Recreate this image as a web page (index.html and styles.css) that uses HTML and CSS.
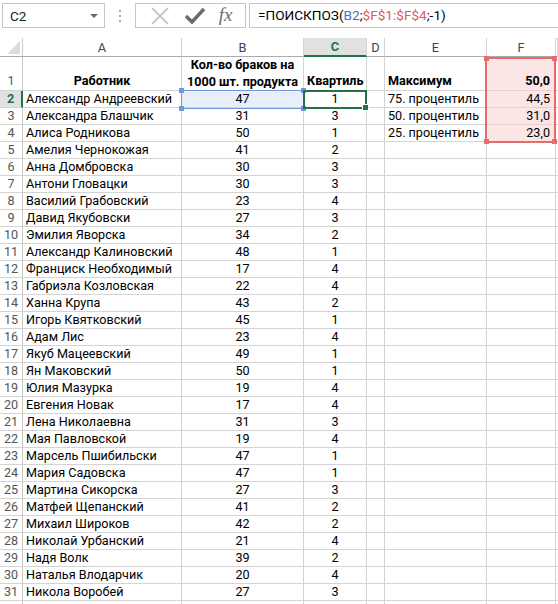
FILE: index.html
```html
<!DOCTYPE html>
<html lang="ru">
<head>
<meta charset="utf-8">
<title>Excel</title>
<link rel="stylesheet" href="styles.css">
</head>
<body>
<div class="fbar">
  <div class="namebox"><span class="nb-text">C2</span><span class="nb-arrow"></span></div>
  <div class="grip"><i></i><i></i><i></i></div>
  <div class="btns">
    <svg class="ic" width="22" height="20" viewBox="0 0 22 20"><path d="M3 2 L19 18 M19 2 L3 18" stroke="#c8c8c8" stroke-width="2" fill="none"/></svg>
    <svg class="ic" width="22" height="20" viewBox="0 0 22 20"><path d="M2 10 L8 16 L20 3" stroke="#6a6a6a" stroke-width="3.4" fill="none" stroke-linejoin="miter"/></svg>
    <span class="fx">fx</span>
  </div>
  <div class="formula">=ПОИСКПОЗ(<span class="ref-b">B2</span>;<span class="ref-f">$F$1:$F$4</span>;-1)</div>
</div>
<div class="sheet">
  <div class="grid" id="grid"></div>
  <div class="ov ov-b"><i class="sq tl"></i><i class="sq tr"></i><i class="sq bl"></i><i class="sq br"></i></div>
  <div class="ov ov-c"><i class="fh"></i></div>
  <div class="ov ov-f"><i class="sq tl"></i><i class="sq tr"></i><i class="sq bl"></i><i class="sq br"></i></div>
</div>
<script src="app.js"></script>
</body>
</html>
```
FILE: app.js
```js
const data = [
["Александр Андреевский",47,1],["Александра Блашчик",31,3],["Алиса Родникова",50,1],
["Амелия Чернокожая",41,2],["Анна Домбровска",30,3],["Антони Гловацки",30,3],
["Василий Грабовский",23,4],["Давид Якубовски",27,3],["Эмилия Яворска",34,2],
["Александр Калиновский",48,1],["Франциск Необходимый",17,4],["Габриэла Козловская",22,4],
["Ханна Крупа",43,2],["Игорь Квятковский",45,1],["Адам Лис",23,4],
["Якуб Мацеевский",49,1],["Ян Маковский",50,1],["Юлия Мазурка",19,4],
["Евгения Новак",17,4],["Лена Николаевна",31,3],["Мая Павловской",19,4],
["Марсель Пшибильски",47,1],["Мария Садовска",47,1],["Мартина Сикорска",27,3],
["Матфей Щепанский",41,2],["Михаил Широков",42,2],["Николай Урбанский",21,4],
["Надя Волк",39,2],["Наталья Влодарчик",20,4],["Никола Воробей",27,3]
];
const ef = {2:["75. процентиль","44,5"],3:["50. процентиль","31,0"],4:["25. процентиль","23,0"]};
const g = document.getElementById('grid');
function c(cls, txt){ const d=document.createElement('div'); d.className='cell '+cls; if(txt!==undefined){const s=document.createElement('span'); s.textContent=txt; d.appendChild(s);} g.appendChild(d); return d; }
c('corner').innerHTML='<span class="tri"></span>';
['A','B','C','D','E','F',''].forEach(l=>c('ch'+(l==='C'?' ch-sel':''), l));
c('rh r1', '1');
c('r1 bold center bottom', 'Работник');
c('r1 bold center bottom wrap', 'Кол-во браков на 1000 шт. продукта');
c('r1 bold left bottom', 'Квартиль');
c('r1');
c('r1 bold left bottom', 'Максимум');
c('r1 bold right bottom pink', '50,0');
c('r1 last');
data.forEach((r,i)=>{
  const n=i+2;
  c('rh'+(n===2?' rh-sel':''), String(n));
  c('left', r[0]);
  c('center'+(n===2?' blue':''), String(r[1]));
  c('center', String(r[2]));
  c('');
  if(ef[n]){ c('left', ef[n][0]); c('right pink', ef[n][1]); }
  else { c(''); c(''); }
  c('last');
});
c('rh'); for(let k=0;k<7;k++) c(k===6?'last':'');
```
FILE: styles.css
```css
html, body { margin: 0; padding: 0; background: #fff; }
body { font-family: Roboto, "Noto Sans", sans-serif; font-size: 12.6px; color: #000; width: 558px; height: 604px; overflow: hidden; }

.fbar { height: 38px; display: flex; align-items: flex-start; padding-top: 3px; box-sizing: border-box; position: relative; }
.namebox { margin-left: 2px; width: 103px; height: 25px; border: 1px solid #c6c6c6; box-sizing: border-box; display: flex; align-items: center; justify-content: space-between; padding: 0 6px 0 7px; }
.nb-text { font-size: 13.5px; color: #222; }
.nb-arrow { width: 0; height: 0; border-left: 4px solid transparent; border-right: 4px solid transparent; border-top: 4px solid #6b6b6b; }
.grip { width: 30px; height: 25px; display: flex; flex-direction: column; align-items: center; justify-content: center; gap: 3px; }
.grip i { width: 2px; height: 2px; background: #a5a5a5; display: block; }
.btns { width: 111px; height: 25px; border: 1px solid #c6c6c6; box-sizing: border-box; display: flex; align-items: center; justify-content: space-around; padding: 0 6px; }
.fx { font-family: "Liberation Serif", "DejaVu Serif", serif; font-style: italic; font-size: 19px; color: #6e6e6e; line-height: 1; margin-top: -2px; }
.formula { flex: 1; margin-left: 3px; height: 25px; border: 1px solid #c6c6c6; border-right: none; box-sizing: border-box; font-size: 13.6px; line-height: 23px; padding-left: 8px; color: #000; white-space: nowrap; }
.ref-b { color: #4472c4; }
.ref-f { color: #e0595b; }

.sheet { position: relative; }
.grid { display: grid; grid-template-columns: 23px 159px 122px 63px 18px 102px 69px 2px; grid-template-rows: 19px 34px repeat(31, 17px); }
.cell { box-sizing: border-box; border-right: 1px solid #d4d4d4; border-bottom: 1px solid #d4d4d4; display: flex; align-items: center; white-space: nowrap; overflow: hidden; line-height: 16px; }
.cell.last { border-right: none; }
.left { padding-left: 3px; }
.center { justify-content: center; }
.right { justify-content: flex-end; padding-right: 5px; }
.bottom { align-items: flex-end; padding-bottom: 1px; }
.bold { font-weight: bold; }
.wrap { white-space: normal; text-align: center; line-height: 17px; padding: 0 1px; }
.pink { background: #fbe5e5; border-bottom-color: #e9cfcf; }
.blue { background: #e8eefa; }

.corner { border-right: 1px solid #c8c8c8; border-bottom: 1px solid #ababab; position: relative; }
.tri { position: absolute; right: 2px; bottom: 2px; width: 0; height: 0; border-left: 13px solid transparent; border-bottom: 13px solid #dcdcdc; }
.ch { justify-content: center; color: #444; font-size: 12.8px; border-bottom: 1px solid #ababab; border-right-color: #d4d4d4; padding-top: 1px; }
.ch-sel { background: #e1e1e1; color: #217346; font-weight: bold; border-bottom: 2px solid #217346; }
.rh { justify-content: center; color: #555; border-right-color: #c8c8c8; }
.rh.r1 { align-items: flex-end; padding-bottom: 1px; }
.rh-sel { background: #e1e1e1; color: #217346; font-weight: bold; border-right: 2px solid #217346; }

.ov { position: absolute; box-sizing: border-box; pointer-events: none; }
.ov-b { left: 181px; top: 52px; width: 123px; height: 19px; border: 1px solid #6e97de; }
.ov-c { left: 303px; top: 52px; width: 64px; height: 19px; border: 2px solid #217346; }
.ov-f { left: 485px; top: 19px; width: 71px; height: 86px; border: 2px solid #e46c6c; }
.sq { position: absolute; width: 5px; height: 5px; display: block; }
.ov-b .sq { background: #6e97de; }
.ov-f .sq { background: #e46c6c; }
.sq.tl { left: -3px; top: -3px; }
.sq.tr { right: -3px; top: -3px; }
.sq.bl { left: -3px; bottom: -3px; }
.sq.br { right: -3px; bottom: -3px; }
.fh { position: absolute; right: -4px; bottom: -4px; width: 5px; height: 5px; background: #217346; border: 1px solid #fff; display: block; }
```
